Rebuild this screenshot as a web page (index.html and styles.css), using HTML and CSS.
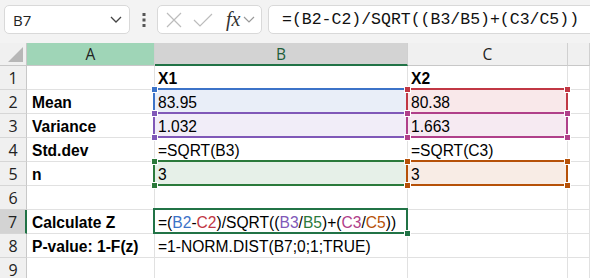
FILE: index.html
```html
<!DOCTYPE html>
<html lang="en">
<head>
    <meta charset="UTF-8">
    <meta name="viewport" content="width=device-width, initial-scale=1.0">
    <title>Z test sheet</title>
    <link rel="stylesheet" href="styles.css">
</head>
<body>
    <!-- Name box + formula bar -->
    <div class="topbar">
        <div class="namebox">
            <span>B7</span>
            <svg class="chev" width="12" height="7" viewBox="0 0 12 7"><path d="M1 1 L6 6 L11 1" fill="none" stroke="#444" stroke-width="1.3"/></svg>
        </div>
        <div class="grip">
            <svg width="4" height="14" viewBox="0 0 4 14"><rect x="0.5" y="0" width="3" height="3" fill="#555"/><rect x="0.5" y="5.5" width="3" height="3" fill="#555"/><rect x="0.5" y="11" width="3" height="3" fill="#555"/></svg>
        </div>
        <div class="fxbox">
            <svg width="16" height="16" viewBox="0 0 16 16"><path d="M1 1 L15 15 M15 1 L1 15" stroke="#bcbcbc" stroke-width="1.2"/></svg>
            <svg class="check" width="20" height="14" viewBox="0 0 20 14"><path d="M1 7 L7 13 L19 1" fill="none" stroke="#bcbcbc" stroke-width="1.2"/></svg>
            <span class="fx">fx</span>
            <svg width="12" height="7" viewBox="0 0 12 7"><path d="M1 1 L6 6 L11 1" fill="none" stroke="#999" stroke-width="1.2"/></svg>
        </div>
        <div class="formula">=(B2-C2)/SQRT((B3/B5)+(C3/C5))</div>
    </div>

    <!-- Sheet grid -->
    <div class="sheet">
        <div class="corner"><span class="tri"></span></div>
        <div class="colhead col-a">A</div>
        <div class="colhead col-b">B</div>
        <div class="colhead">C</div>
        <div class="colhead"></div>

        <div class="rowhead">1</div>
        <div class="cell"></div>
        <div class="cell bold">X1</div>
        <div class="cell bold">X2</div>
        <div class="cell"></div>

        <div class="rowhead">2</div>
        <div class="cell bold">Mean</div>
        <div class="cell ref ref-blue">83.95<i class="box"></i><i class="h tl"></i><i class="h tr"></i><i class="h bl"></i><i class="h br"></i></div>
        <div class="cell ref ref-red">80.38<i class="box"></i><i class="h tl"></i><i class="h tr"></i><i class="h bl"></i><i class="h br"></i></div>
        <div class="cell"></div>

        <div class="rowhead">3</div>
        <div class="cell bold">Variance</div>
        <div class="cell ref ref-purple">1.032<i class="box"></i><i class="h tl"></i><i class="h tr"></i><i class="h bl"></i><i class="h br"></i></div>
        <div class="cell ref ref-magenta">1.663<i class="box"></i><i class="h tl"></i><i class="h tr"></i><i class="h bl"></i><i class="h br"></i></div>
        <div class="cell"></div>

        <div class="rowhead">4</div>
        <div class="cell bold">Std.dev</div>
        <div class="cell">=SQRT(B3)</div>
        <div class="cell">=SQRT(C3)</div>
        <div class="cell"></div>

        <div class="rowhead">5</div>
        <div class="cell bold">n</div>
        <div class="cell ref ref-green">3<i class="box"></i><i class="h tl"></i><i class="h tr"></i><i class="h bl"></i><i class="h br"></i></div>
        <div class="cell ref ref-orange">3<i class="box"></i><i class="h tl"></i><i class="h tr"></i><i class="h bl"></i><i class="h br"></i></div>
        <div class="cell"></div>

        <div class="rowhead">6</div>
        <div class="cell"></div>
        <div class="cell"></div>
        <div class="cell"></div>
        <div class="cell"></div>

        <div class="rowhead active">7</div>
        <div class="cell bold">Calculate Z</div>
        <div class="cell selected">=(<span class="c-blue">B2</span>-<span class="c-red">C2</span>)/SQRT((<span class="c-purple">B3</span>/<span class="c-green">B5</span>)+(<span class="c-magenta">C3</span>/<span class="c-orange">C5</span>))<i class="box"></i><i class="h br"></i></div>
        <div class="cell"></div>
        <div class="cell"></div>

        <div class="rowhead">8</div>
        <div class="cell bold">P-value: 1-F(z)</div>
        <div class="cell">=1-NORM.DIST(B7;0;1;TRUE)</div>
        <div class="cell"></div>
        <div class="cell"></div>

        <div class="rowhead">9</div>
        <div class="cell"></div>
        <div class="cell"></div>
        <div class="cell"></div>
        <div class="cell"></div>
    </div>
</body>
</html>
```

FILE: styles.css
```css
/* General */
body {
    margin: 0;
    width: 590px;
    height: 278px;
    overflow: hidden;
    background-color: #fff;
    font-family: "Liberation Sans", Arial, sans-serif;
    color: #000;
}

/* Top bar */
.topbar {
    height: 43px;
    box-sizing: border-box;
    padding: 5px 0 0 4px;
    background-color: #f3f3f3;
    display: flex;
    align-items: flex-start;
}

.namebox,
.fxbox,
.formula {
    height: 29px;
    box-sizing: border-box;
    background-color: #fff;
    border: 1px solid #d9d9d9;
    border-radius: 5px;
    display: flex;
    align-items: center;
}

.namebox {
    width: 126px;
    padding: 0 7px 0 8px;
    justify-content: space-between;
    font-family: "Open Sans", "Noto Sans", sans-serif;
    font-size: 15px;
    color: #222;
}

.grip {
    width: 27px;
    height: 29px;
    display: flex;
    align-items: center;
    justify-content: center;
}

.fxbox {
    width: 105px;
    padding: 0 4px 0 8px;
}

.fxbox .check {
    margin-left: 11px;
}

.fx {
    font-family: "Liberation Serif", serif;
    font-style: italic;
    font-size: 20px;
    color: #333;
    margin: 0 3px 0 13px;
}

.formula {
    flex: 1;
    margin-left: 6px;
    margin-right: -10px;
    padding-left: 13px;
    font-family: "Liberation Mono", "DejaVu Sans Mono", monospace;
    font-size: 16.5px;
    color: #111;
}

/* Sheet */
.sheet {
    display: grid;
    grid-template-columns: 27px 128px 253px 160px 1fr;
    grid-template-rows: 23px repeat(9, 24px);
}

.corner {
    background-color: #f0f0f0;
    border-right: 1px solid #c8c8c8;
    border-bottom: 1px solid #c8c8c8;
    box-sizing: border-box;
    position: relative;
}

.tri {
    position: absolute;
    right: 3px;
    bottom: 3px;
    width: 0;
    height: 0;
    border-left: 15px solid transparent;
    border-bottom: 15px solid #b7b7b7;
}

.colhead {
    background-color: #f0f0f0;
    border-right: 1px solid #d0d0d0;
    border-bottom: 1px solid #c8c8c8;
    box-sizing: border-box;
    text-align: center;
    font-family: "Open Sans", "Noto Sans", sans-serif;
    font-size: 15.5px;
    line-height: 22px;
    color: #222;
}

.col-a {
    background-color: #9fd5b7;
}

.col-b {
    background-color: #d3d3d3;
    border-bottom: 2px solid #217346;
    color: #1f5e3a;
}

.rowhead {
    background-color: #f0f0f0;
    border-right: 1px solid #c8c8c8;
    border-bottom: 1px solid #d6d6d6;
    box-sizing: border-box;
    text-align: center;
    font-family: "Open Sans", "Noto Sans", sans-serif;
    font-size: 16px;
    line-height: 24px;
    color: #222;
}

.rowhead.active {
    background-color: #d3d3d3;
    border-right: 2px solid #217346;
}

.cell {
    position: relative;
    border-right: 1px solid #e1e1e1;
    border-bottom: 1px solid #e1e1e1;
    box-sizing: border-box;
    padding: 3px 0 0 3px;
    font-size: 15.6px;
    line-height: 20px;
    white-space: nowrap;
}

.bold {
    font-weight: bold;
}

.sheet > .cell:nth-child(5n+2) {
    padding-left: 5px;
}

/* Referenced range highlights */
.box {
    position: absolute;
    top: -2px;
    left: -2px;
    right: -1px;
    bottom: -1px;
    border: 2px solid var(--ref);
}

.h {
    position: absolute;
    width: 5px;
    height: 5px;
    background-color: var(--ref);
    border: 1px solid #fff;
    z-index: 1;
}

.tl { top: -4px; left: -4px; }
.tr { top: -4px; right: -4px; }
.bl { bottom: -4px; left: -4px; }
.br { bottom: -4px; right: -4px; }

.ref-blue { --ref: #3c73c8; background-color: #e9eef8; }
.ref-red { --ref: #c13744; background-color: #f9e8ea; }
.ref-purple { --ref: #8058b8; background-color: #f1edf8; }
.ref-magenta { --ref: #b0408a; background-color: #f6eaf2; }
.ref-green { --ref: #2b7a3b; background-color: #e6f0e8; }
.ref-orange { --ref: #b65108; background-color: #f8ece5; }

.selected {
    --ref: #217346;
}

.c-blue { color: #3c73c8; }
.c-red { color: #c13744; }
.c-purple { color: #8058b8; }
.c-green { color: #2b7a3b; }
.c-magenta { color: #b0408a; }
.c-orange { color: #b65108; }
```
